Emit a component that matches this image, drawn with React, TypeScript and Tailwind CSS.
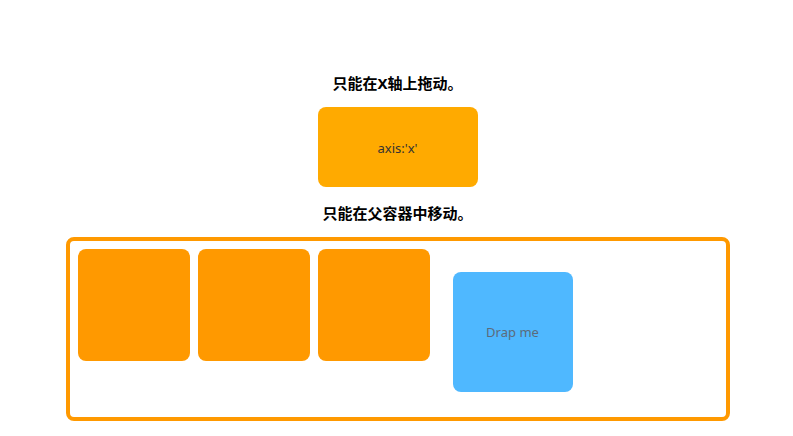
export default function App() {
  const squares = [1, 2, 3];

  return (
    <div
      className="w-full min-h-[436px] bg-white pl-[2px] pt-[71px] flex flex-col items-center"
      style={{ fontFamily: '"Noto Sans", "Noto Sans CJK SC", sans-serif' }}
    >
      <h3 className="text-[15px] leading-6 font-bold text-black">只能在X轴上拖动。</h3>

      <div className="mt-3 w-40 h-20 rounded-lg bg-[#ffaa00] flex items-center justify-center pt-[3px] text-[13px] text-[#333]">
        axis:'x'
      </div>

      <h3 className="mt-[14px] text-[15px] leading-6 font-bold text-black">只能在父容器中移动。</h3>

      <div className="relative mt-3 w-[664px] h-[184px] border-4 border-[#ff9900] rounded-lg p-2 flex gap-2">
        {squares.map((n) => (
          <div key={n} className="w-28 h-28 rounded-lg bg-[#ff9900]" />
        ))}

        <div className="absolute left-[383px] top-[31px] w-[120px] h-[120px] rounded-lg bg-[#4fb8ff] flex items-center justify-center pt-[2px] text-[13px] text-[#5b6b7b]">
          Drap me
        </div>
      </div>
    </div>
  );
}
